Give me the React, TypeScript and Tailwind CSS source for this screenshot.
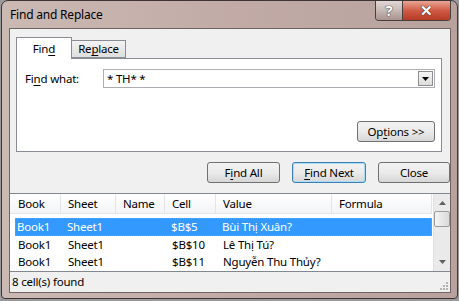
import React from "react";

const font = "font-['Segoe_UI','Noto_Sans',sans-serif]";

const U = ({ children }: { children: React.ReactNode }) => (
  <span className="underline underline-offset-2">{children}</span>
);

const Btn = ({ children, className = "" }: { children: React.ReactNode; className?: string }) => (
  <div
    className={`flex items-center justify-center h-[21px] rounded-[3px] border bg-gradient-to-b from-[#f2f2f2] via-[#ebebeb] to-[#d6d6d6] text-black ${className}`}
  >
    {children}
  </div>
);

const cols = [
  { label: "Book", w: "w-[50px]" },
  { label: "Sheet", w: "w-[55px]" },
  { label: "Name", w: "w-[49px]" },
  { label: "Cell", w: "w-[51px]" },
  { label: "Value", w: "w-[116px]" },
  { label: "Formula", w: "w-[100px]" },
];

const rows = [
  ["Book1", "Sheet1", "", "$B$5", "Bùi Thị Xuân?", ""],
  ["Book1", "Sheet1", "", "$B$10", "Lê Thị Tú?", ""],
  ["Book1", "Sheet1", "", "$B$11", "Nguyễn Thu Thủy?", ""],
];

export default function App() {
  return (
    <div className={`w-[459px] h-[301px] bg-[#9a9a9a] text-[11.5px] tracking-[-0.2px] ${font}`}>
      <div className="w-[457px] h-[299px] ml-[1px] flex flex-col rounded-t-[7px] rounded-b-[4px] border border-[#3d3535] bg-gradient-to-r from-[#cbb9b4] via-[#c2aba6] to-[#b8a29e]">
        {/* title bar */}
        <div className="h-[27px] flex items-start shrink-0">
          <div className="pl-[8px] pt-[5px] text-[12px] text-black">Find and Replace</div>
          <div className="ml-auto mr-[6px] flex h-[20px] rounded-b-[4px] border border-t-0 border-[#4a3f3d] overflow-hidden">
            <div className="w-[27px] flex items-center justify-center bg-gradient-to-b from-[#e2d8d6] via-[#c6b8b5] to-[#a8928e] border-r border-[#4a3f3d] text-[15px] font-bold text-white [text-shadow:0_0_1px_#222,0_0_1px_#222]">
              ?
            </div>
            <div className="w-[47px] flex items-center justify-center bg-gradient-to-b from-[#e8a595] via-[#cf5a46] to-[#b63a25] text-[15px] font-black text-white [text-shadow:0_0_1px_#222,0_0_1px_#222]">
              ✕
            </div>
          </div>
        </div>

        {/* client area */}
        <div className="flex-1 ml-[7px] mr-[6px] mb-[5px] flex flex-col border border-[#6f6463] bg-[#f0f0f0] text-black">
          <div className="pt-[8px] pl-[6px] pr-[8px]">
            {/* tabs */}
            <div className="flex items-end h-[21px]">
              <div className="w-[56px] h-[22px] -mb-[1px] z-10 bg-white border border-b-0 border-[#898c95] flex items-center justify-center">
                Fin<U>d</U>
              </div>
              <div className="w-[54px] h-[18px] bg-gradient-to-b from-[#f3f3f3] to-[#dedede] border border-l-0 border-[#898c95] flex items-center justify-center">
                Re<U>p</U>lace
              </div>
            </div>
            {/* panel */}
            <div className="h-[94px] bg-white border border-[#898c95] flex flex-col">
              <div className="flex items-center mt-[10px] pl-[8px]">
                <span className="w-[78px]">
                  Fi<U>n</U>d what:
                </span>
                <div className="flex-1 mr-[6px] h-[19px] border border-[#abadb3] flex items-center pl-[3px]">
                  <span className="flex-1">* TH* *</span>
                  <div className="w-[15px] h-[15px] mr-[1px] border border-[#8d8d8d] bg-gradient-to-b from-[#f4f4f4] to-[#dcdcdc] flex items-center justify-center">
                    <svg width="7" height="4" viewBox="0 0 7 4">
                      <path d="M0 0h7L3.5 4z" fill="#000" />
                    </svg>
                  </div>
                </div>
              </div>
              <div className="flex justify-end mt-[33px] mr-[6px]">
                <Btn className="w-[78px] border-[#707070]">
                  Op<U>t</U>ions &gt;&gt;
                </Btn>
              </div>
            </div>
            {/* action buttons */}
            <div className="flex justify-end gap-[12px] mt-[10px]">
              <Btn className="w-[73px] border-[#707070]">
                F<U>i</U>nd All
              </Btn>
              <Btn className="w-[74px] border-[#3c7fb1] shadow-[inset_0_0_0_1px_#a8dcf7] from-[#eaf6fd] via-[#dbeefa] to-[#bee6fd]">
                <U>F</U>ind Next
              </Btn>
              <Btn className="w-[72px] mr-[-8px] border-[#707070]">Close</Btn>
            </div>
          </div>

          {/* results list */}
          <div className="mt-[10px] h-[79px] border-t border-b border-[#828790] bg-white flex overflow-hidden">
            <div className="flex-1 flex flex-col">
              <div className="h-[20px] shrink-0 flex bg-gradient-to-b from-white to-[#f3f4f6] border-b border-[#e5e5e5] pl-[1px]">
                {cols.map((c) => (
                  <div key={c.label} className={`${c.w} flex items-center pl-[7px] border-r border-[#e3e5e8]`}>
                    {c.label}
                  </div>
                ))}
              </div>
              <div className="pt-[4px]">
                {rows.map((r, i) => (
                  <div
                    key={i}
                    className={`h-[17.5px] flex ${
                      i === 0 ? "bg-[#3399ff] text-white outline outline-1 outline-dotted outline-[#e08a2a] -outline-offset-1 ml-[5px]" : ""
                    }`}
                  >
                    {r.map((cell, j) => (
                      <div
                        key={j}
                        className={`${cols[j].w} ${i === 0 && j === 0 ? "!w-[45px] pl-[2px]" : "pl-[7px]"} flex items-center whitespace-nowrap ${j === 0 && i !== 0 ? "ml-[1px]" : ""}`}
                      >
                        {cell}
                      </div>
                    ))}
                  </div>
                ))}
              </div>
            </div>
            {/* scrollbar */}
            <div className="w-[17px] ml-[1px] bg-[#eaeaea] border-l border-[#e0e0e0] flex flex-col items-center py-[1px]">
              <div className="h-[16px] flex items-center justify-center">
                <svg width="7" height="4" viewBox="0 0 7 4">
                  <path d="M3.5 0L7 4H0z" fill="#606060" />
                </svg>
              </div>
              <div className="w-[16px] h-[16px] rounded-[2px] border border-[#9b9b9b] bg-gradient-to-r from-[#f4f4f4] to-[#dadada]" />
              <div className="flex-1" />
              <div className="h-[16px] flex items-center justify-center">
                <svg width="7" height="4" viewBox="0 0 7 4">
                  <path d="M0 0h7L3.5 4z" fill="#606060" />
                </svg>
              </div>
            </div>
          </div>

          {/* status bar */}
          <div className="flex-1 flex items-center pl-[2px] relative">
            8 cell(s) found
            <svg className="absolute right-[1px] bottom-[1px]" width="10" height="10" viewBox="0 0 10 10">
              <g fill="#b4b4b4">
                <rect x="7" y="1" width="2" height="2" />
                <rect x="4" y="4" width="2" height="2" />
                <rect x="7" y="4" width="2" height="2" />
                <rect x="1" y="7" width="2" height="2" />
                <rect x="4" y="7" width="2" height="2" />
                <rect x="7" y="7" width="2" height="2" />
              </g>
            </svg>
          </div>
        </div>
      </div>
    </div>
  );
}
